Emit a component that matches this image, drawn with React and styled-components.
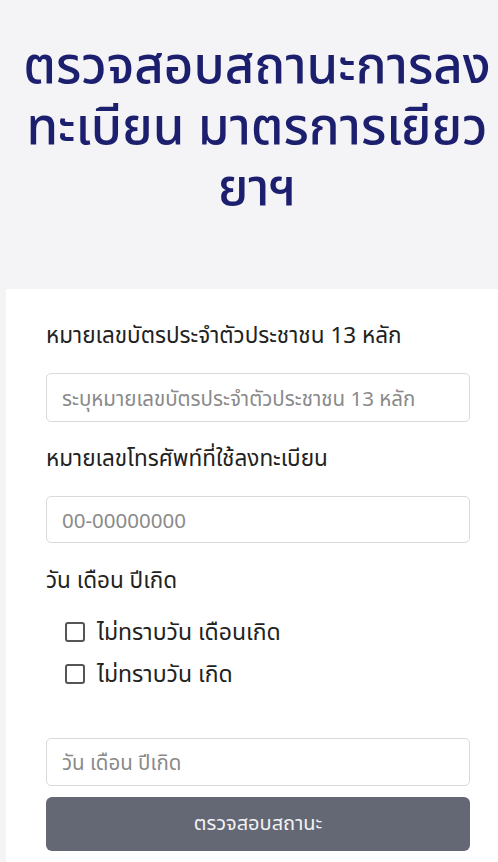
import React from "react";
import styled, { createGlobalStyle } from "styled-components";

const Global = createGlobalStyle`
  html, body { margin: 0; padding: 0; background: #f4f4f6; }
  body { font-family: "Noto Sans", "Noto Sans Thai", sans-serif; }
`;

const Page = styled.div`
  display: flex;
  flex-direction: column;
  min-height: 862px;
`;

const Header = styled.header`
  padding: 33px 0 0 16px;
  height: 289px;
  box-sizing: border-box;
`;

const Title = styled.h1`
  margin: 0;
  text-align: center;
  font-size: 51px;
  line-height: 61px;
  font-weight: 500;
  color: #1c1f6e;
`;

const Card = styled.main`
  margin-left: 6px;
  background: #ffffff;
  padding: 30px 28px 12px 40px;
  display: flex;
  flex-direction: column;
  flex: 1;
`;

const Label = styled.label`
  font-size: 22.5px;
  color: #222;
  line-height: 32px;
  margin-bottom: ${(p) => p.$mb ?? 22}px;
`;

const Input = styled.input`
  box-sizing: border-box;
  width: 100%;
  height: ${(p) => p.$h || 49}px;
  border: 1px solid #d8dadd;
  border-radius: 5px;
  padding: 0 15px;
  font-family: inherit;
  font-size: 20.5px;
  color: #333;
  background: #fff;
  margin-bottom: ${(p) => p.$mb || 0}px;
  &::placeholder { color: #8a8a8a; }
`;

const CheckRow = styled.label`
  display: flex;
  align-items: center;
  gap: 12px;
  padding-left: 19px;
  font-size: 23px;
  color: #222;
  height: 42px;
`;

const Box = styled.span`
  width: 20px;
  height: 20px;
  border: 2px solid #555;
  border-radius: 3px;
  box-sizing: border-box;
  flex: none;
`;

const Spacer = styled.div`
  height: ${(p) => p.$h}px;
  flex: none;
`;

const Button = styled.button`
  margin-top: 11px;
  height: 54px;
  border: none;
  border-radius: 6px;
  background: #636874;
  color: #f2f2f4;
  font-family: inherit;
  font-size: 20px;
`;

export default function App() {
  return (
    <Page>
      <Global />
      <Header>
        <Title>
          ตรวจสอบสถานะการลง
          <br />
          ทะเบียน มาตรการเยียว
          <br />
          ยาฯ
        </Title>
      </Header>
      <Card>
        <Label>หมายเลขบัตรประจำตัวประชาชน 13 หลัก</Label>
        <Input placeholder="ระบุหมายเลขบัตรประจำตัวประชาชน 13 หลัก" $mb={20} />
        <Label>หมายเลขโทรศัพท์ที่ใช้ลงทะเบียน</Label>
        <Input placeholder="00-00000000" $h={47} $mb={21} />
        <Label $mb={15}>วัน เดือน ปีเกิด</Label>
        <CheckRow><Box />ไม่ทราบวัน เดือนเกิด</CheckRow>
        <CheckRow><Box />ไม่ทราบวัน เกิด</CheckRow>
        <Spacer $h={43} />
        <Input placeholder="วัน เดือน ปีเกิด" $h={48} />
        <Button>ตรวจสอบสถานะ</Button>
      </Card>
    </Page>
  );
}
